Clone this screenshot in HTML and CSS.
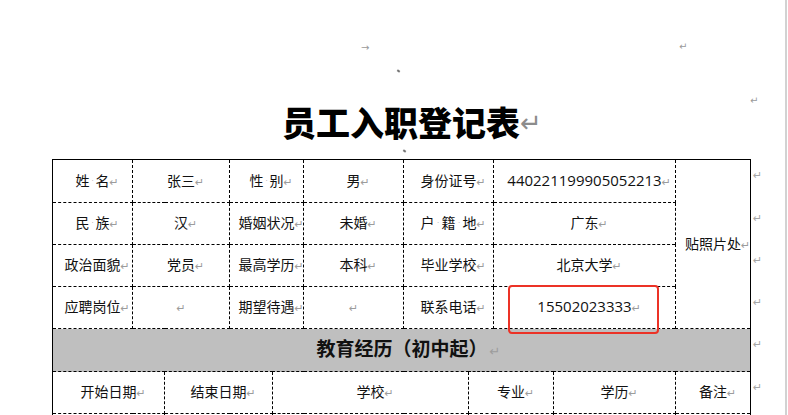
FILE: index.html
```html
<!DOCTYPE html>
<html lang="zh-CN">
<head>
<meta charset="utf-8">
<title>员工入职登记表</title>
<link rel="stylesheet" href="styles.css">
</head>
<body>
<div class="page">
  <span class="art art-tab">→</span>
  <span class="art art-r1">↵</span>
  <span class="tick tick1"></span>
  <span class="art art-r2">↵</span>
  <span class="tick tick2"></span>
  <div class="sheet">
    <h1 class="title">员工入职登记表<span class="m mt">↵</span></h1>
    <table class="form">
      <colgroup>
        <col class="c1"><col class="c2"><col class="c3"><col class="c4"><col class="c5"><col class="c6"><col class="c7"><col class="c8"><col class="c9"><col class="c10"><col class="c11"><col class="c12">
      </colgroup>
      <tbody>
        <tr class="h43 top">
          <td class="lft">姓<span class="sp">·</span>名<span class="m">↵</span></td>
          <td colspan="2">张三<span class="m">↵</span></td>
          <td colspan="2">性<span class="sp">·</span>别<span class="m">↵</span></td>
          <td>男<span class="m">↵</span></td>
          <td colspan="2">身份证号<span class="m">↵</span></td>
          <td colspan="2" class="num">440221199905052213<span class="m">↵</span></td>
          <td rowspan="4" class="rgt">贴照片处<span class="m">↵</span></td>
          <td class="rm"><span class="rmk">↵</span></td>
        </tr>
        <tr class="h42">
          <td class="lft">民<span class="sp">·</span>族<span class="m">↵</span></td>
          <td colspan="2">汉<span class="m">↵</span></td>
          <td colspan="2">婚姻状况<span class="m">↵</span></td>
          <td>未婚<span class="m">↵</span></td>
          <td colspan="2">户<span class="sp2">·</span>籍<span class="sp2">·</span>地<span class="m">↵</span></td>
          <td colspan="2">广东<span class="m">↵</span></td>
          <td class="rm"><span class="rmk">↵</span></td>
        </tr>
        <tr class="h42">
          <td class="lft">政治面貌<span class="m">↵</span></td>
          <td colspan="2">党员<span class="m">↵</span></td>
          <td colspan="2">最高学历<span class="m">↵</span></td>
          <td>本科<span class="m">↵</span></td>
          <td colspan="2">毕业学校<span class="m">↵</span></td>
          <td colspan="2">北京大学<span class="m">↵</span></td>
          <td class="rm"><span class="rmk">↵</span></td>
        </tr>
        <tr class="h42">
          <td class="lft">应聘岗位<span class="m">↵</span></td>
          <td colspan="2"><span class="m0">↵</span></td>
          <td colspan="2">期望待遇<span class="m">↵</span></td>
          <td><span class="m0">↵</span></td>
          <td colspan="2">联系电话<span class="m">↵</span></td>
          <td colspan="2" class="num phone">15502023333<span class="m">↵</span><div class="redbox"></div></td>
          <td class="rm"><span class="rmk">↵</span></td>
        </tr>
        <tr class="h43">
          <td colspan="11" class="band lft rgt">教育经历（初中起）<span class="m mb">↵</span></td>
          <td class="rm"><span class="rmk">↵</span></td>
        </tr>
        <tr class="h42">
          <td colspan="2" class="lft">开始日期<span class="m">↵</span></td>
          <td colspan="2">结束日期<span class="m">↵</span></td>
          <td colspan="3">学校<span class="m">↵</span></td>
          <td colspan="2">专业<span class="m">↵</span></td>
          <td>学历<span class="m">↵</span></td>
          <td class="rgt">备注<span class="m">↵</span></td>
          <td class="rm"><span class="rmk">↵</span></td>
        </tr>
        <tr class="h42">
          <td colspan="2" class="lft"></td>
          <td colspan="2"></td>
          <td colspan="3"></td>
          <td colspan="2"></td>
          <td></td>
          <td class="rgt"></td>
          <td class="rm"></td>
        </tr>
      </tbody>
    </table>
  </div>
</div>
</body>
</html>
```

FILE: styles.css
```css
* { box-sizing: border-box; }
html, body { margin: 0; padding: 0; background: #fff; }
body {
  font-family: "Open Sans", "Noto Sans CJK SC", sans-serif;
  color: #111;
}
.page {
  position: relative;
  width: 787px;
  height: 415px;
  overflow: hidden;
  border-right: 2px solid #d2d2d2;
}
.sheet {
  margin-left: 52px;
  padding-top: 102px;
}
.title {
  margin: 0 0 17px 0;
  width: 698px;
  height: 40px;
  text-align: center;
  font-family: "Noto Sans CJK SC", sans-serif;
  font-size: 34px;
  line-height: 40px;
  font-weight: 900;
  color: #000;
}
.form {
  border-collapse: collapse;
  table-layout: fixed;
  width: 728px;
}
.c1 { width: 80px; }
.c2 { width: 32px; }
.c3 { width: 65px; }
.c4 { width: 43px; }
.c5 { width: 31px; }
.c6 { width: 100px; }
.c7 { width: 65px; }
.c8 { width: 25px; }
.c9 { width: 60px; }
.c10 { width: 122px; }
.c11 { width: 75px; }
.c12 { width: 30px; }
.h43 { height: 43px; }
.h42 { height: 42px; }
.form td {
  border: 1px dashed #000;
  padding: 0;
  text-align: center;
  vertical-align: middle;
  font-size: 14px;
  line-height: 20px;
  white-space: nowrap;
  font-family: "Noto Sans CJK SC", sans-serif;
}
.form tr.top td:not(.rm) { border-top-style: solid; }
.form td.lft { border-left-style: solid; }
.form td.rgt { border-right-style: solid; }
.form td.num {
  font-family: "Open Sans", "Noto Sans CJK SC", sans-serif;
  font-size: 15px;
}
.form td.rm {
  border-style: none;
  vertical-align: top;
  text-align: left;
  padding: 3px 0 0 2px;
}
.rmk {
  font-family: "DejaVu Sans", sans-serif;
  font-size: 11px;
  line-height: 12px;
  color: #a6a6a6;
}
.form td.band {
  background: #bfbfbf;
  font-size: 19px;
  font-weight: 700;
  color: #111;
  padding-left: 3px;
}
.sp, .sp2 {
  display: inline-block;
  width: 6px;
  font-family: "DejaVu Sans", sans-serif;
  font-size: 7px;
  color: #aaa;
  text-align: center;
  vertical-align: 3px;
  line-height: 10px;
}
.sp2 { width: 7px; }
.m {
  display: inline-block;
  width: 0;
  white-space: nowrap;
  font-family: "DejaVu Sans", sans-serif;
  font-size: 11px;
  color: #9c9c9c;
  font-weight: 400;
}
.m0 {
  font-family: "DejaVu Sans", sans-serif;
  font-size: 11px;
  color: #9c9c9c;
}
.mt {
  font-size: 26px;
  color: #8c8c8c;
  vertical-align: 4px;
}
.mb {
  font-size: 13px;
  margin-left: 2px;
}
.phone { position: relative; }
.redbox {
  position: absolute;
  left: 14px;
  top: -2px;
  width: 151px;
  height: 49px;
  border: 2px solid #ec3226;
  border-radius: 4px;
}
.art {
  position: absolute;
  font-family: "DejaVu Sans", sans-serif;
  font-size: 10px;
  line-height: 12px;
  color: #9a9a9a;
}
.art-tab { left: 361px; top: 42px; }
.art-r1 { left: 679px; top: 41px; }
.art-r2 { left: 750px; top: 95px; }
.tick {
  position: absolute;
  width: 3px;
  height: 2px;
  background: #777;
  transform: rotate(35deg);
}
.tick1 { left: 397px; top: 70px; }
.tick2 { left: 403px; top: 150px; }
```
